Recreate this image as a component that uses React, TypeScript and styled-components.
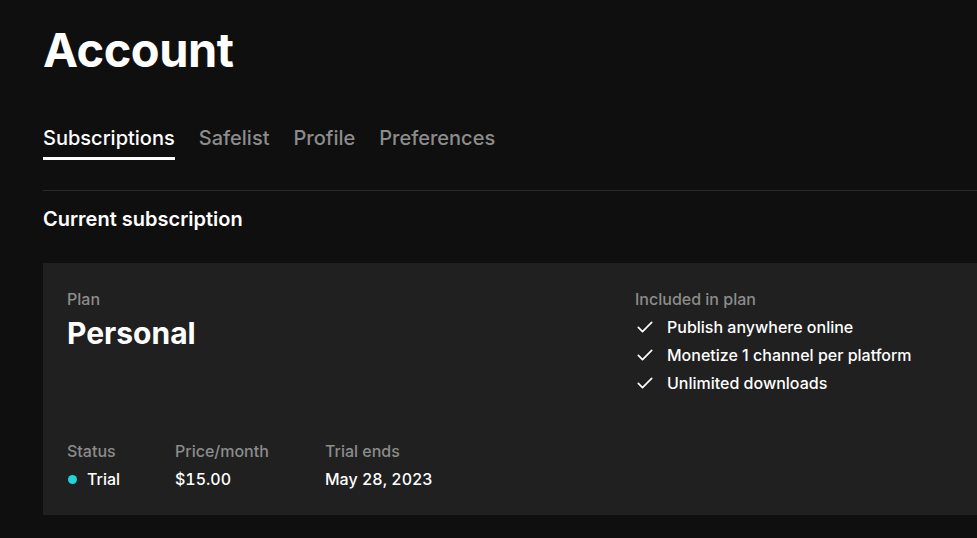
import React from "react";
import styled, { createGlobalStyle } from "styled-components";

const GlobalStyle = createGlobalStyle`
  html, body {
    margin: 0;
    padding: 0;
    background: #0f0f0f;
    overflow: hidden;
  }
  body {
    font-family: Inter, "Noto Sans", sans-serif;
    color: #ffffff;
    -webkit-font-smoothing: antialiased;
  }
`;

const Page = styled.div`
  width: 100%;
  height: 538px;
  padding: 22px 0 0 43px;
  box-sizing: border-box;
`;

const Title = styled.h1`
  margin: 0;
  font-size: 47px;
  font-weight: 700;
  letter-spacing: -0.5px;
  line-height: 56px;
`;

const Tabs = styled.nav`
  display: flex;
  gap: 24px;
  margin-top: 46px;
  border-bottom: 1px solid #2b2b2b;
  padding-bottom: 30px;
`;

const Tab = styled.span<{ $active?: boolean }>`
  font-size: 20px;
  font-weight: 500;
  line-height: 28px;
  padding-bottom: 5px;
  color: ${(p) => (p.$active ? "#ffffff" : "#8c8c8c")};
  border-bottom: 3px solid ${(p) => (p.$active ? "#ffffff" : "transparent")};
`;

const SectionTitle = styled.h2`
  margin: 16px 0 0;
  font-size: 20px;
  font-weight: 600;
  line-height: 24px;
`;

const Card = styled.section`
  margin-top: 32px;
  background: #202020;
  height: 252px;
  padding: 26px 24px 0;
  box-sizing: border-box;
  display: grid;
  grid-template-columns: 568px 1fr;
  grid-template-rows: auto 1fr;
`;

const Label = styled.div`
  font-size: 16px;
  font-weight: 500;
  line-height: 20px;
  color: #8c8c8c;
`;

const PlanName = styled.div`
  font-size: 30px;
  font-weight: 700;
  line-height: 36px;
  margin-top: 6px;
`;

const Features = styled.ul`
  list-style: none;
  margin: 8px 0 0;
  padding: 0;
  display: flex;
  flex-direction: column;
  gap: 8px;
`;

const Feature = styled.li`
  display: flex;
  align-items: center;
  gap: 12px;
  font-size: 16px;
  font-weight: 500;
  line-height: 20px;
`;

const Stats = styled.div`
  grid-column: 1 / -1;
  align-self: end;
  display: flex;
  padding-bottom: 26px;
`;

const Stat = styled.div<{ $w: number }>`
  width: ${(p) => p.$w}px;
  display: flex;
  flex-direction: column;
  gap: 8px;
`;

const Value = styled.div`
  display: flex;
  align-items: center;
  gap: 10px;
  font-size: 16px;
  font-weight: 500;
  line-height: 20px;
  font-variant-numeric: tabular-nums;
`;

const Dot = styled.span`
  width: 9px;
  height: 9px;
  border-radius: 50%;
  background: #1fd5d8;
  margin-left: 1px;
`;

const Check = () => (
  <svg width="20" height="20" viewBox="0 0 24 24" fill="none" stroke="#fff" strokeWidth="2" strokeLinecap="round" strokeLinejoin="round">
    <path d="M4 12.5l5 5L20 6.5" />
  </svg>
);

export default function App() {
  return (
    <>
      <GlobalStyle />
      <Page>
        <Title>Account</Title>
        <Tabs>
          <Tab $active>Subscriptions</Tab>
          <Tab>Safelist</Tab>
          <Tab>Profile</Tab>
          <Tab>Preferences</Tab>
        </Tabs>
        <SectionTitle>Current subscription</SectionTitle>
        <Card>
          <div>
            <Label>Plan</Label>
            <PlanName>Personal</PlanName>
          </div>
          <div>
            <Label>Included in plan</Label>
            <Features>
              <Feature><Check />Publish anywhere online</Feature>
              <Feature><Check />Monetize 1 channel per platform</Feature>
              <Feature><Check />Unlimited downloads</Feature>
            </Features>
          </div>
          <Stats>
            <Stat $w={108}>
              <Label>Status</Label>
              <Value><Dot />Trial</Value>
            </Stat>
            <Stat $w={150}>
              <Label>Price/month</Label>
              <Value>$15.00</Value>
            </Stat>
            <Stat $w={200}>
              <Label>Trial ends</Label>
              <Value>May 28, 2023</Value>
            </Stat>
          </Stats>
        </Card>
      </Page>
    </>
  );
}
